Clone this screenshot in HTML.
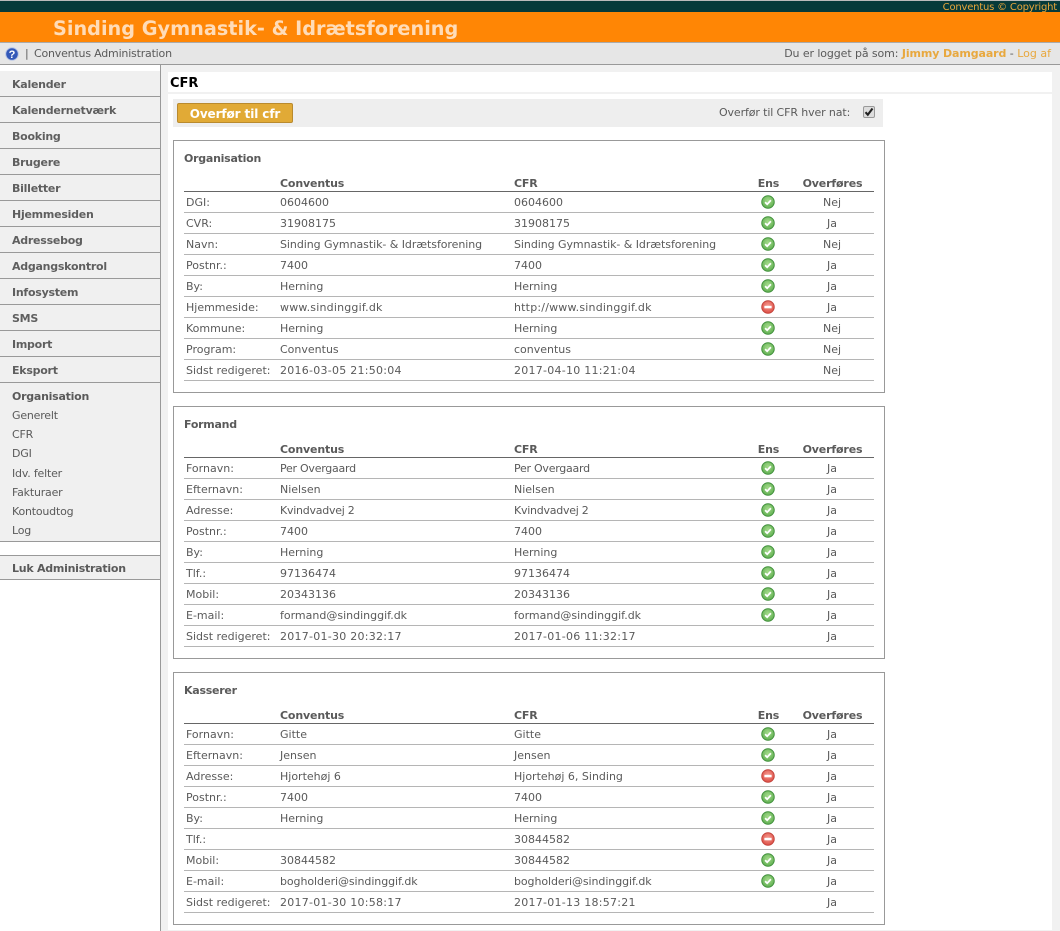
<!DOCTYPE html>
<html><head><meta charset="utf-8"><style>
html,body{margin:0;padding:0}
body{width:1060px;height:931px;position:relative;overflow:hidden;background:#f1f1f1;font:11px/14px "DejaVu Sans","Liberation Sans",sans-serif;color:#5a5a5a}
.a{position:absolute;white-space:nowrap}
.m{position:absolute;left:0;width:148px;padding-left:12px;height:25px;background:#f0f0f0;border-bottom:1px solid #999;font-weight:bold;line-height:27px;color:#5f5f5f;letter-spacing:-.25px}
.s{position:absolute;left:12px;line-height:14px;letter-spacing:-.2px}
.p{position:absolute;left:173px;width:710px;height:251px;border:1px solid #999;background:#fff}
.t{position:absolute;left:10px;top:11px;font-weight:bold;line-height:14px;letter-spacing:-.25px}
table{position:absolute;left:10px;top:32px;width:690px;border-collapse:collapse;table-layout:fixed}
th{font-weight:bold;text-align:left;height:14px;padding:4px 0 0 2px;border-bottom:1px solid #666;line-height:14px;vertical-align:top;letter-spacing:-.15px}
td{height:18px;padding:2px 0 0 2px;border-bottom:1px solid #b5b5b5;line-height:18px;white-space:nowrap;overflow:visible;vertical-align:top}
td.c{text-align:center;padding-left:0}
th.c{text-align:center;padding-left:1px}
td svg{display:block;margin:1px auto 0}
.d{letter-spacing:.26px}
.w{letter-spacing:.2px}
.k{letter-spacing:-.25px}
.n{letter-spacing:-.06px}
</style></head><body>
<svg width="0" height="0" style="position:absolute"><defs>
<radialGradient id="g" cx=".5" cy=".4" r=".6"><stop offset="0" stop-color="#a5dc8c"/><stop offset="1" stop-color="#5fae50"/></radialGradient>
<radialGradient id="r" cx=".5" cy=".4" r=".6"><stop offset="0" stop-color="#f59a90"/><stop offset="1" stop-color="#dc4d44"/></radialGradient>
<symbol id="ok" viewBox="0 0 15 15"><circle cx="7.5" cy="7.5" r="6.7" fill="url(#g)" stroke="#3f8f3a"/><path d="M4.4 7.7l2.2 2.2 4-4.3" fill="none" stroke="#fff" stroke-width="1.9"/></symbol>
<symbol id="no" viewBox="0 0 15 15"><circle cx="7.5" cy="7.5" r="6.7" fill="url(#r)" stroke="#c2423b"/><rect x="3.6" y="6.2" width="7.8" height="2.7" fill="#fff"/></symbol>
</defs></svg>

<div class="a" style="left:0;top:0;width:1060px;height:1px;background:#bbb"></div>
<div class="a" style="left:0;top:1px;width:1060px;height:11px;background:#063a3a"></div>
<div class="a" style="right:3px;top:1px;line-height:13px;font-size:10px;color:#e8a63a;letter-spacing:-.2px">Conventus © Copyright</div>
<div class="a" style="left:0;top:12px;width:1060px;height:30px;background:#ff8605"></div>
<div class="a" style="left:53px;top:16px;font-size:19.25px;line-height:26px;font-weight:bold;color:#ffdcb8">Sinding Gymnastik- &amp; Idrætsforening</div>
<div class="a" style="left:0;top:42px;width:1060px;background:#e6e6e6;border-top:1px solid #aaa;border-bottom:1px solid #999;height:21px"></div>
<svg class="a" style="left:5px;top:47px" width="15" height="15" viewBox="0 0 15 15"><circle cx="7" cy="7" r="6.3" fill="#3358b8" stroke="#b9c6e6"/><text x="7" y="11" font-family="Liberation Sans,sans-serif" font-size="11" font-weight="bold" fill="#fff" text-anchor="middle">?</text></svg>
<div class="a" style="left:25px;top:47px">|</div>
<div class="a" style="left:34px;top:47px;letter-spacing:-.2px">Conventus Administration</div>
<div class="a" style="right:9px;top:47px"><span style="letter-spacing:-.1px">Du er logget på som:</span> <b style="color:#e8a83e;letter-spacing:-.1px">Jimmy Damgaard</b> - <span style="color:#e8a83e">Log af</span></div>

<div class="a" style="left:0;top:65px;width:160px;height:866px;background:#fff;border-right:1px solid #999"></div>
<div class="m" style="top:71px">Kalender</div>
<div class="m" style="top:97px">Kalendernetværk</div>
<div class="m" style="top:123px">Booking</div>
<div class="m" style="top:149px">Brugere</div>
<div class="m" style="top:175px">Billetter</div>
<div class="m" style="top:201px">Hjemmesiden</div>
<div class="m" style="top:227px">Adressebog</div>
<div class="m" style="top:253px">Adgangskontrol</div>
<div class="m" style="top:279px">Infosystem</div>
<div class="m" style="top:305px">SMS</div>
<div class="m" style="top:331px">Import</div>
<div class="m" style="top:357px">Eksport</div>
<div class="a" style="left:0;top:383px;width:160px;height:158px;background:#f0f0f0;border-bottom:1px solid #999"></div>
<div class="s" style="top:390px;font-weight:bold;letter-spacing:-.25px">Organisation</div>
<div class="s" style="top:409px">Generelt</div>
<div class="s" style="top:428px">CFR</div>
<div class="s" style="top:447px">DGI</div>
<div class="s" style="top:467px">Idv. felter</div>
<div class="s" style="top:486px">Fakturaer</div>
<div class="s" style="top:505px">Kontoudtog</div>
<div class="s" style="top:524px">Log</div>
<div class="a" style="left:0;top:555px;width:148px;padding-left:12px;height:23px;background:#f0f0f0;border-top:1px solid #999;border-bottom:1px solid #999;font-weight:bold;line-height:25px;letter-spacing:-.25px">Luk Administration</div>

<div class="a" style="left:168px;top:72px;width:884px;height:20px;background:#fff"></div>
<div class="a" style="left:170px;top:76px;font-size:13px;line-height:15px;font-weight:bold;color:#000">CFR</div>
<div class="a" style="left:168px;top:94px;width:884px;height:836px;background:#fff"></div>
<div class="a" style="left:173px;top:99px;width:710px;height:28px;background:#eee"></div>
<div class="a" style="left:177px;top:103px;width:114px;height:18px;background:#e1aa36;border:1px solid #b98a2e;border-radius:2px;color:#fff;font-size:12px;font-weight:bold;line-height:21px;text-align:center;letter-spacing:-.1px">Overfør til cfr</div>
<div class="a" style="left:719px;top:106px;letter-spacing:-.12px">Overfør til CFR hver nat:</div>
<div class="a" style="left:863px;top:106px;width:10px;height:10px;background:#ddd;border:1px solid #999;border-radius:2px"></div>
<svg class="a" style="left:864px;top:107px" width="10" height="10" viewBox="0 0 10 10"><path d="M1.5 5.2l2.3 2.5L8.5 1.5" fill="none" stroke="#222" stroke-width="2.1"/></svg>

<div class="p" style="top:140px"><div class="t">Organisation</div>
<table><colgroup><col style="width:94px"><col style="width:234px"><col style="width:234px"><col style="width:44px"><col style="width:84px"></colgroup>
<tr><th></th><th>Conventus</th><th>CFR</th><th class="c">Ens</th><th class="c">Overføres</th></tr>
<tr><td>DGI:</td><td>0604600</td><td>0604600</td><td class="c"><svg width="14" height="14"><use href="#ok"/></svg></td><td class="c">Nej</td></tr>
<tr><td>CVR:</td><td>31908175</td><td>31908175</td><td class="c"><svg width="14" height="14"><use href="#ok"/></svg></td><td class="c">Ja</td></tr>
<tr><td>Navn:</td><td class="n">Sinding Gymnastik- &amp; Idrætsforening</td><td class="n">Sinding Gymnastik- &amp; Idrætsforening</td><td class="c"><svg width="14" height="14"><use href="#ok"/></svg></td><td class="c">Nej</td></tr>
<tr><td>Postnr.:</td><td>7400</td><td>7400</td><td class="c"><svg width="14" height="14"><use href="#ok"/></svg></td><td class="c">Ja</td></tr>
<tr><td>By:</td><td>Herning</td><td>Herning</td><td class="c"><svg width="14" height="14"><use href="#ok"/></svg></td><td class="c">Ja</td></tr>
<tr><td>Hjemmeside:</td><td class="w">www.sindinggif.dk</td><td class="w">http://www.sindinggif.dk</td><td class="c"><svg width="14" height="14"><use href="#no"/></svg></td><td class="c">Ja</td></tr>
<tr><td>Kommune:</td><td>Herning</td><td>Herning</td><td class="c"><svg width="14" height="14"><use href="#ok"/></svg></td><td class="c">Nej</td></tr>
<tr><td>Program:</td><td>Conventus</td><td>conventus</td><td class="c"><svg width="14" height="14"><use href="#ok"/></svg></td><td class="c">Nej</td></tr>
<tr><td>Sidst redigeret:</td><td class="d">2016-03-05 21:50:04</td><td class="d">2017-04-10 11:21:04</td><td class="c"></td><td class="c">Nej</td></tr>
</table></div>

<div class="p" style="top:406px"><div class="t">Formand</div>
<table><colgroup><col style="width:94px"><col style="width:234px"><col style="width:234px"><col style="width:44px"><col style="width:84px"></colgroup>
<tr><th></th><th>Conventus</th><th>CFR</th><th class="c">Ens</th><th class="c">Overføres</th></tr>
<tr><td>Fornavn:</td><td class="k">Per Overgaard</td><td class="k">Per Overgaard</td><td class="c"><svg width="14" height="14"><use href="#ok"/></svg></td><td class="c">Ja</td></tr>
<tr><td>Efternavn:</td><td>Nielsen</td><td>Nielsen</td><td class="c"><svg width="14" height="14"><use href="#ok"/></svg></td><td class="c">Ja</td></tr>
<tr><td>Adresse:</td><td class="k">Kvindvadvej 2</td><td class="k">Kvindvadvej 2</td><td class="c"><svg width="14" height="14"><use href="#ok"/></svg></td><td class="c">Ja</td></tr>
<tr><td>Postnr.:</td><td>7400</td><td>7400</td><td class="c"><svg width="14" height="14"><use href="#ok"/></svg></td><td class="c">Ja</td></tr>
<tr><td>By:</td><td>Herning</td><td>Herning</td><td class="c"><svg width="14" height="14"><use href="#ok"/></svg></td><td class="c">Ja</td></tr>
<tr><td>Tlf.:</td><td>97136474</td><td>97136474</td><td class="c"><svg width="14" height="14"><use href="#ok"/></svg></td><td class="c">Ja</td></tr>
<tr><td>Mobil:</td><td>20343136</td><td>20343136</td><td class="c"><svg width="14" height="14"><use href="#ok"/></svg></td><td class="c">Ja</td></tr>
<tr><td>E-mail:</td><td>formand@sindinggif.dk</td><td>formand@sindinggif.dk</td><td class="c"><svg width="14" height="14"><use href="#ok"/></svg></td><td class="c">Ja</td></tr>
<tr><td>Sidst redigeret:</td><td class="d">2017-01-30 20:32:17</td><td class="d">2017-01-06 11:32:17</td><td class="c"></td><td class="c">Ja</td></tr>
</table></div>

<div class="p" style="top:672px"><div class="t">Kasserer</div>
<table><colgroup><col style="width:94px"><col style="width:234px"><col style="width:234px"><col style="width:44px"><col style="width:84px"></colgroup>
<tr><th></th><th>Conventus</th><th>CFR</th><th class="c">Ens</th><th class="c">Overføres</th></tr>
<tr><td>Fornavn:</td><td>Gitte</td><td>Gitte</td><td class="c"><svg width="14" height="14"><use href="#ok"/></svg></td><td class="c">Ja</td></tr>
<tr><td>Efternavn:</td><td>Jensen</td><td>Jensen</td><td class="c"><svg width="14" height="14"><use href="#ok"/></svg></td><td class="c">Ja</td></tr>
<tr><td>Adresse:</td><td>Hjortehøj 6</td><td>Hjortehøj 6, Sinding</td><td class="c"><svg width="14" height="14"><use href="#no"/></svg></td><td class="c">Ja</td></tr>
<tr><td>Postnr.:</td><td>7400</td><td>7400</td><td class="c"><svg width="14" height="14"><use href="#ok"/></svg></td><td class="c">Ja</td></tr>
<tr><td>By:</td><td>Herning</td><td>Herning</td><td class="c"><svg width="14" height="14"><use href="#ok"/></svg></td><td class="c">Ja</td></tr>
<tr><td>Tlf.:</td><td></td><td>30844582</td><td class="c"><svg width="14" height="14"><use href="#no"/></svg></td><td class="c">Ja</td></tr>
<tr><td>Mobil:</td><td>30844582</td><td>30844582</td><td class="c"><svg width="14" height="14"><use href="#ok"/></svg></td><td class="c">Ja</td></tr>
<tr><td>E-mail:</td><td style="letter-spacing:-.08px">bogholderi@sindinggif.dk</td><td style="letter-spacing:-.08px">bogholderi@sindinggif.dk</td><td class="c"><svg width="14" height="14"><use href="#ok"/></svg></td><td class="c">Ja</td></tr>
<tr><td>Sidst redigeret:</td><td class="d">2017-01-30 10:58:17</td><td class="d">2017-01-13 18:57:21</td><td class="c"></td><td class="c">Ja</td></tr>
</table></div>
</body></html>
